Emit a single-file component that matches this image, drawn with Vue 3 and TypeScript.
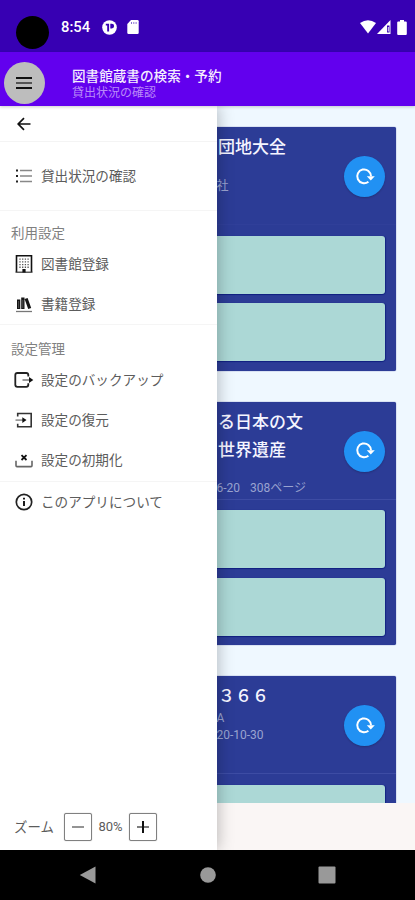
<script setup lang="ts">
interface Book {
  id: number
  titles: string[]
  author: string
  meta: string[]
  slots: number
}

interface MenuItem {
  label: string
  icon: string
}

const books: Book[] = [
  { id: 1, titles: ['団地大全'], author: '', meta: ['社'], slots: 2 },
  { id: 2, titles: ['る日本の文', '世界遺産'], author: '', meta: ['6-20', '308ページ'], slots: 2 },
  { id: 3, titles: ['３６６'], author: 'A', meta: ['20-10-30'], slots: 2 },
]

const libraryItems: MenuItem[] = [
  { label: '図書館登録', icon: 'building' },
  { label: '書籍登録', icon: 'books' },
]

const settingItems: MenuItem[] = [
  { label: '設定のバックアップ', icon: 'export' },
  { label: '設定の復元', icon: 'import' },
  { label: '設定の初期化', icon: 'reset' },
]
</script>

<template>
  <div class="screen">
    <header class="status">
      <span class="camera"></span>
      <span class="clock">8:54</span>
      <svg class="status-app" viewBox="0 0 15 15">
        <circle cx="7.5" cy="7.5" r="7.3" fill="#fff" />
        <path d="M3.800 3.800h3.300v7.600H5.200V5.500H3.800zM8.300 3.800h1.500a2.300 2.300 0 0 1 0 4.600H8.300z" fill="#3700b3" />
      </svg>
      <svg class="status-sd" viewBox="0 0 12 14">
        <path d="M4 0h6.5q1.2 0 1.2 1.2v11.6q0 1.2-1.2 1.2h-9Q.3 14 .3 12.800V4z" fill="#fff" />
        <path d="M4.500 2v2M6.800 2v2M9.100 2v2" stroke="#8a70d4" stroke-width="1" />
      </svg>
      <div class="signals">
        <svg class="wifi" viewBox="0 0 16 14"><path d="M0 3Q8-2.500 16 3L8 13.500z" fill="#fff" /></svg>
        <svg class="cell" viewBox="0 0 14 14">
          <path d="M13.500 0v14H0z" fill="#fff" />
          <path d="M10 5.500h2.500v7H10z" fill="#3700b3" />
          <path d="M11.300 7v4.500" stroke="#fff" stroke-width=".9" />
        </svg>
        <svg class="battery" viewBox="0 0 10 15"><path d="M3 0h4v1.500h1.800q1 0 1 1V14q0 1-1 1H1.200q-1 0-1-1V2.500q0-1 1-1H3z" fill="#fff" /></svg>
      </div>
    </header>

    <div class="appbar">
      <button class="menu-button" aria-label="メニュー">
        <svg viewBox="0 0 16 12">
          <path d="M0 1h16M0 11h16" stroke="#111" stroke-width="2" />
          <path d="M0 6h16" stroke="#555" stroke-width="2" />
        </svg>
      </button>
      <div class="heading">
        <h1>図書館蔵書の検索・予約</h1>
        <p>貸出状況の確認</p>
      </div>
    </div>

    <div class="body">
      <main class="list">
        <article v-for="book in books" :key="book.id" class="card">
          <div class="card-head">
            <div class="card-text">
              <h2 v-for="line in book.titles" :key="line">{{ line }}</h2>
              <p>{{ book.author }}</p>
              <p><span v-for="part in book.meta" :key="part">{{ part }}</span></p>
            </div>
            <button class="reload" aria-label="更新">
              <svg viewBox="0 0 20 20">
                <path d="M13.400 14.700A6.900 6.900 0 1 1 16 9.300" fill="none" stroke="#fff" stroke-width="2" />
                <path d="M11.800 9.200h8L15.800 13.600z" fill="#fff" />
              </svg>
            </button>
          </div>
          <div class="slots">
            <div v-for="n in book.slots" :key="n" class="slot"></div>
          </div>
        </article>
      </main>
      <footer class="bottom"></footer>

      <aside class="drawer">
        <div class="drawer-back">
          <svg viewBox="0 0 14 14"><path d="M13.500 7H1.500M7 1.200L1.200 7 7 12.800" fill="none" stroke="#111" stroke-width="1.700" /></svg>
        </div>
        <div class="group first">
          <div class="item">
            <svg class="icon" viewBox="0 0 18 18">
              <path d="M5 3.500h12M5 9h12M5 14.500h12" stroke="#888" stroke-width="1.600" />
              <path d="M1 3.500h2M1 9h2M1 14.500h2" stroke="#222" stroke-width="1.800" />
            </svg>
            <span>貸出状況の確認</span>
          </div>
        </div>
        <div class="group library">
          <h3>利用設定</h3>
          <div v-for="item in libraryItems" :key="item.label" class="item">
            <svg v-if="item.icon === 'building'" class="icon" viewBox="0 0 18 18">
              <path d="M1.500 17V.8h15V17" fill="none" stroke="#111" stroke-width="1.600" />
              <path d="M.5 17.200h17" stroke="#333" stroke-width="1.200" />
              <path d="M5 3.500v10M7.700 3.500v10M10.400 3.500v10M13.100 3.500v10" stroke="#555" stroke-width="1.300" stroke-dasharray="1.300 1.400" />
              <path d="M7.400 14h3.200v3.500H7.400z" fill="#111" />
            </svg>
            <svg v-else class="icon" viewBox="0 0 18 18">
              <path d="M2 4.500h3.300V14H2zM6.200 2.500h3.300V14H6.200zM9.600 4.100l3-1.100 3.600 10-3 1.100z" fill="#151515" />
              <path d="M3.600 6v7M7.800 5v8" stroke="#777" stroke-width=".6" />
              <path d="M1 16.500h16" stroke="#777" stroke-width="1.300" />
            </svg>
            <span>{{ item.label }}</span>
          </div>
        </div>
        <div class="group settings">
          <h3>設定管理</h3>
          <div v-for="item in settingItems" :key="item.label" class="item">
            <svg v-if="item.icon === 'export'" class="icon wide" viewBox="0 0 20 18">
              <path d="M14.300 5.500V4q0-2-2-2H3.300q-2 0-2 2v9.800q0 2 2 2h9q2 0 2-2v-1.500" fill="none" stroke="#222" stroke-width="1.800" />
              <path d="M8.500 9h7" stroke="#888" stroke-width="1.700" />
              <path d="M15 6L19.300 9 15 12z" fill="#111" />
            </svg>
            <svg v-else-if="item.icon === 'import'" class="icon" viewBox="0 0 18 18">
              <path d="M2.700 5.500V2.500h13.500v13.200H2.700v-3" fill="none" stroke="#333" stroke-width="1.600" />
              <path d="M.5 9.100h7.500" stroke="#888" stroke-width="1.500" />
              <path d="M7.300 6.200l4.200 2.900-4.200 2.900z" fill="#111" />
            </svg>
            <svg v-else class="icon" viewBox="0 0 18 18">
              <path d="M1 9.700v4.800q0 1.100 1 1.100h14q1 0 1-1.100V9.700" fill="none" stroke="#666" stroke-width="1.600" />
              <path d="M6.500 4.200l5 4.800M11.500 4.200L6.500 9" stroke="#111" stroke-width="1.800" />
            </svg>
            <span>{{ item.label }}</span>
          </div>
        </div>
        <div class="group about">
          <div class="item">
            <svg class="icon" viewBox="0 0 18 18">
              <circle cx="9" cy="9" r="7.700" fill="none" stroke="#222" stroke-width="1.700" />
              <path d="M9 8V13M9 4.700v1.900" stroke="#111" stroke-width="1.900" />
            </svg>
            <span>このアプリについて</span>
          </div>
        </div>
        <div class="zoom">
          <span class="zoom-label">ズーム</span>
          <button aria-label="縮小"><svg viewBox="0 0 12 12"><path d="M0 6h12" stroke="#888" stroke-width="1.800" /></svg></button>
          <span class="zoom-value">80%</span>
          <button aria-label="拡大">
            <svg viewBox="0 0 12 12"><path d="M0 6h12" stroke="#666" stroke-width="1.700" /><path d="M6 0v12" stroke="#111" stroke-width="2" /></svg>
          </button>
        </div>
      </aside>
    </div>

    <nav class="navbar">
      <svg viewBox="0 0 18 18"><path d="M16.500 .5v17L.8 9z" fill="#999" /></svg>
      <svg viewBox="0 0 18 18"><circle cx="9" cy="9" r="7.800" fill="#999" /></svg>
      <svg viewBox="0 0 18 18"><rect x=".5" y=".5" width="17" height="17" rx="1" fill="#999" /></svg>
    </nav>
  </div>
</template>

<style>
body {
  margin: 0;
}
</style>

<style scoped>
.screen {
  width: 415px;
  height: 900px;
  display: flex;
  flex-direction: column;
  overflow: hidden;
  background: #000;
  font-family: Roboto, "Noto Sans CJK JP", sans-serif;
}
h1, h2, h3, p {
  margin: 0;
  font-weight: 400;
}
button {
  padding: 0;
  border: 0;
  display: flex;
  align-items: center;
  justify-content: center;
}
svg {
  display: block;
  flex: none;
}
.status {
  height: 52px;
  flex: none;
  box-sizing: border-box;
  padding: 2px 4px 0 16px;
  display: flex;
  align-items: center;
  background: #3700b3;
}
.camera {
  width: 33px;
  height: 33px;
  margin-top: 11px;
  border-radius: 50%;
  background: #000;
}
.clock {
  width: 41px;
  margin-left: 12px;
  color: #fff;
  font-size: 14.8px;
  font-weight: 500;
}
.status-app {
  width: 15px;
  height: 15px;
}
.status-sd {
  width: 12px;
  height: 14px;
  margin-left: 10px;
}
.signals {
  margin-left: auto;
  display: flex;
  align-items: center;
}
.wifi {
  width: 16px;
  height: 14px;
}
.cell {
  width: 14px;
  height: 14px;
  margin-left: 1px;
}
.battery {
  width: 10px;
  height: 15px;
  margin: 0 4px 0 6px;
}
.appbar {
  height: 54px;
  flex: none;
  box-sizing: border-box;
  padding: 10px 0 0 4px;
  display: flex;
  align-items: flex-start;
  background: #6200ee;
  position: relative;
  z-index: 2;
  box-shadow: 0 1px 3px rgba(0, 0, 0, 0.2);
}
.menu-button {
  width: 41px;
  height: 42px;
  border-radius: 50%;
  background: #bdbdbd;
}
.menu-button svg {
  width: 16px;
  height: 12px;
  margin-right: 1px;
}
.heading {
  margin-left: 27px;
  padding-top: 5px;
}
.heading h1 {
  color: #f5edff;
  font-size: 13.6px;
  font-weight: 500;
  line-height: 18px;
}
.heading p {
  color: #b98af8;
  font-size: 12px;
  line-height: 16px;
}
.body {
  height: 744px;
  flex: none;
  position: relative;
  display: flex;
  flex-direction: column;
  background: #eff8ff;
}
.list {
  height: 697px;
  box-sizing: border-box;
  padding: 21px 19.500px 0;
  overflow: hidden;
  display: flex;
  flex-direction: column;
  gap: 31px;
}
.card {
  height: 243.500px;
  flex: none;
  border-radius: 2px;
  background: #2c3c96;
  box-shadow: 0 0 1px #162785;
}
.card-head {
  height: 98px;
  box-sizing: border-box;
  padding: 6px 10.500px 0 198.500px;
  display: flex;
  justify-content: space-between;
  border-bottom: 1px solid #3d4ca4;
}
.card:first-child .card-head {
  border-bottom-color: #303f99;
}
.card-text h2 {
  color: #f5f5ff;
  font-size: 17px;
  font-weight: 500;
  line-height: 28px;
  white-space: nowrap;
}
.card-text p {
  height: 16.500px;
  margin-left: -1.500px;
  color: #9aa3d0;
  font-size: 12px;
  line-height: 17px;
  display: flex;
  gap: 10px;
  white-space: nowrap;
}
.reload {
  width: 41px;
  height: 41px;
  margin-top: 23px;
  border-radius: 50%;
  background: #2191f3;
  box-shadow: 0 1px 2px rgba(0, 0, 0, 0.2);
}
.reload svg {
  width: 20px;
  height: 20px;
}
.slots {
  padding: 10.500px 10.500px 0;
  display: flex;
  flex-direction: column;
  gap: 9.500px;
}
.slot {
  height: 58px;
  border-radius: 3px;
  background: #acd8d6;
  box-shadow: 0 1px 1px #102080, 1px 0 1px #142484;
}
.bottom {
  height: 47px;
  background: #faf6f5;
}
.drawer {
  position: absolute;
  top: 0;
  left: 0;
  bottom: 0;
  width: 217px;
  display: flex;
  flex-direction: column;
  background: #fff;
  box-shadow: 1px 0 15px rgba(0, 0, 0, 0.26);
  color: #5c5c5c;
  clip-path: inset(0 -30px 0 0);
}
.drawer-back {
  height: 36px;
  box-sizing: border-box;
  padding-left: 17px;
  display: flex;
  align-items: center;
  border-bottom: 1px solid #f4f4f4;
}
.drawer-back svg {
  width: 14px;
  height: 14px;
  margin-top: 1px;
}
.group {
  box-sizing: border-box;
  border-bottom: 1px solid #f5f5f5;
}
.first {
  height: 69px;
  padding-top: 14px;
}
.library {
  height: 114px;
  padding-top: 10px;
}
.settings {
  height: 157px;
  padding-top: 12px;
}
.about {
  border: 0;
}
.group h3 {
  padding-left: 11px;
  color: #808080;
  font-size: 13.500px;
  line-height: 24px;
}
.item {
  height: 40.400px;
  padding-left: 15px;
  display: flex;
  align-items: center;
  font-size: 13.600px;
  line-height: 20px;
  white-space: nowrap;
}
.item span {
  margin-left: 8px;
}
.icon {
  width: 18px;
  height: 18px;
}
.icon.wide {
  width: 20px;
  margin-left: -1px;
}
.icon.wide + span {
  margin-left: 7px;
}
.library .item:nth-of-type(1) {
  margin-top: -1.500px;
}
.settings .item:nth-of-type(1) {
  margin-top: -1.500px;
}
.zoom {
  margin-top: auto;
  padding: 0 0 9px 14px;
  display: flex;
  align-items: center;
  font-size: 13px;
}
.zoom-label {
  width: 50px;
  font-size: 13.400px;
  margin-top: -2px;
}
.zoom button {
  width: 28px;
  height: 28px;
  border: 1px solid #808080;
  border-radius: 2px;
  background: #fff;
  box-sizing: border-box;
  box-shadow: 0 0 1px #999;
}
.zoom button svg {
  width: 12px;
  height: 12px;
}
.zoom-value {
  width: 37px;
  margin-top: -1px;
  text-align: center;
}
.navbar {
  height: 50px;
  flex: none;
  box-sizing: border-box;
  padding-left: 78.500px;
  display: flex;
  align-items: center;
  gap: 102.500px;
  background: #000;
}
.navbar svg {
  width: 18px;
  height: 18px;
}
.navbar svg:last-child {
  margin-left: -1.500px;
}
</style>
